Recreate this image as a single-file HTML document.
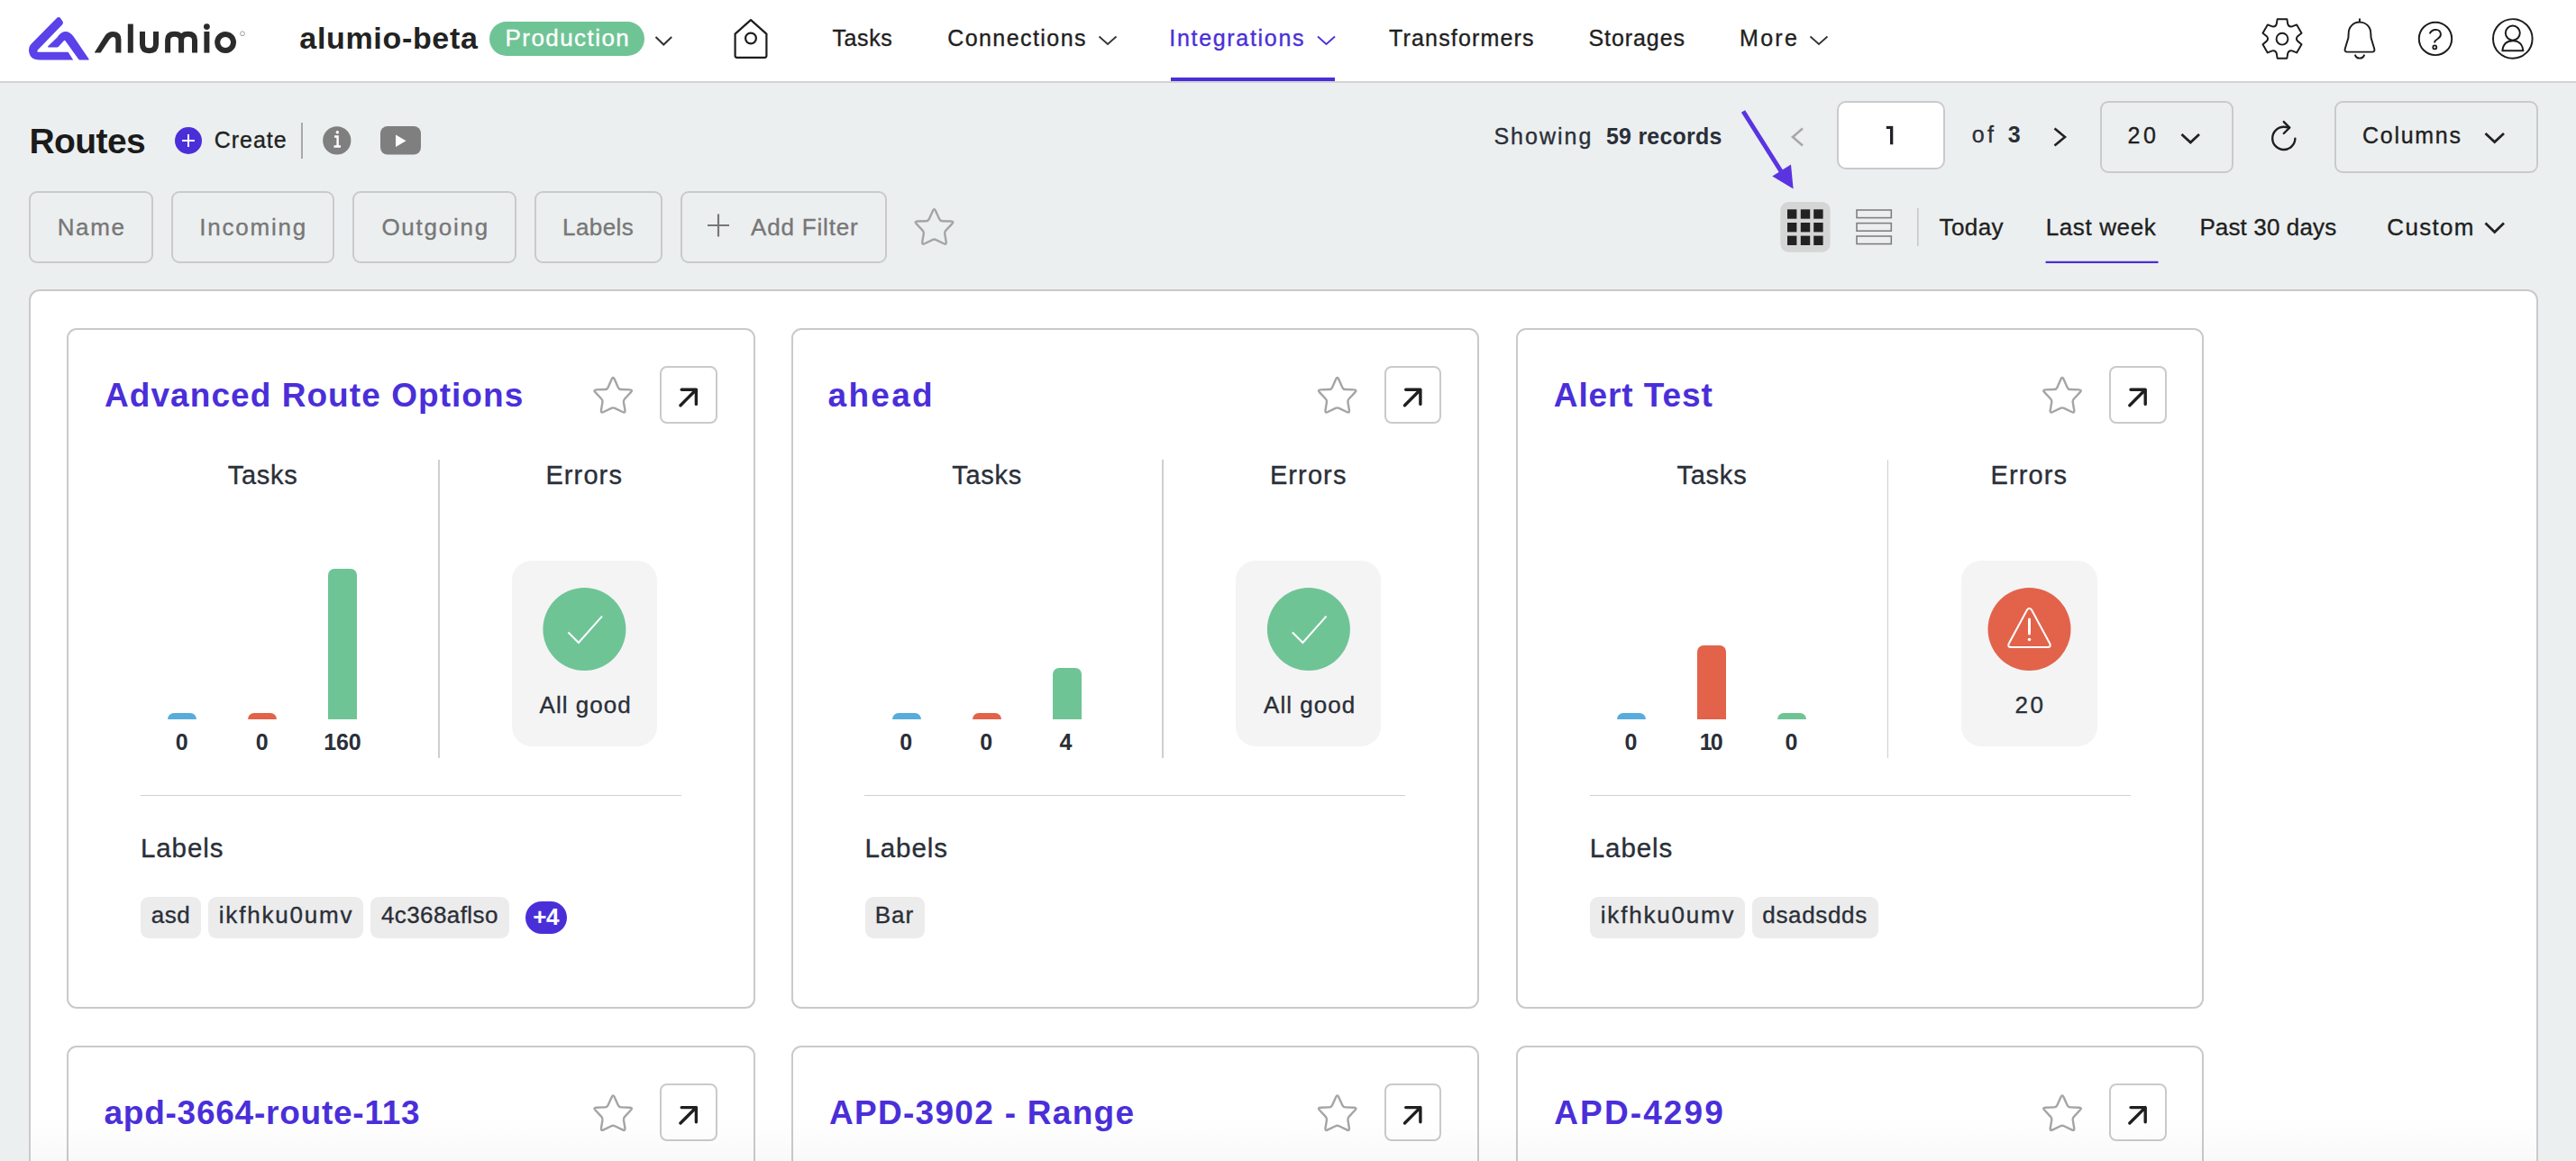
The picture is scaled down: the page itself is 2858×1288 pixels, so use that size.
<!DOCTYPE html>
<html><head><meta charset="utf-8"><style>
html,body{margin:0;padding:0;}
body{width:2858px;height:1288px;overflow:hidden;position:relative;background:#eceff0;font-family:"Liberation Sans",sans-serif;}
.t{position:absolute;white-space:nowrap;}
.a{position:absolute;box-sizing:border-box;}
svg{position:absolute;overflow:visible;}
</style></head><body>
<!-- header -->
<div class="a" style="left:0;top:0;width:2858px;height:90px;background:#fff;"></div>
<div class="a" style="left:0;top:90px;width:2858px;height:2px;background:#d3d3d3;"></div>
<!-- logo mark -->
<svg style="left:0;top:0" width="300" height="90" viewBox="0 0 300 90">
<path fill="#5b41e9" d="M63.5 19.6 Q65.2 18.4 66.8 19.8 L69.6 23.8 Q70.6 25.6 69.2 27.2 L41.8 55.4 Q40.6 57.6 43 57.8 L75.6 57.8 L81.2 66.4 L44 66.6 Q32.4 66.6 32 55.6 Q32 51 35.6 47.8 Z"/>
<path fill="#5b41e9" d="M53 51.4 L63.2 41.8 Q67.6 35.2 72.2 35 Q78 35 81.6 40.6 L98.6 65.4 Q99 66.6 97.6 66.6 L89.4 66.6 Q88 66.6 87 65.4 L72.4 45.2 Q71.6 44.4 70.8 45.2 L65.2 51.4 Q64 52.6 62 52.6 L53.4 52.6 Z"/>
<g fill="none" stroke="#2b2b2b" stroke-width="6">

<path d="M144.8 26.6 L144.8 58.6"/>
<path d="M158 35 L158 49 Q158 56.2 165.5 56.2 Q173 56.2 173 49 L173 35"/>
<path d="M186.1 58.6 L186.1 44.5 Q186.1 37.8 193.6 37.8 Q201.1 37.8 201.1 44.5 L201.1 58.6 M201.1 44.5 Q201.1 37.8 208.6 37.8 Q216 37.8 216 44.5 L216 58.6"/>
<path d="M229.4 35 L229.4 58.6"/>
<ellipse cx="250.1" cy="47" rx="8.9" ry="9"/>
</g>
<circle cx="229.4" cy="29.6" r="3.4" fill="#2b2b2b"/>
<path fill="#2b2b2b" d="M104.7 58.6 L111.6 58.6 L121.6 43.6 Q123.4 41 125.4 41 Q128.3 41 128.3 44.5 L128.3 58.6 L134.4 58.6 L134.4 43.8 Q134.4 35 125.2 35 Q119.6 35 116.6 39.6 Z"/>
<circle cx="269" cy="37.3" r="2.4" fill="none" stroke="#888" stroke-width="0.8"/>
</svg>
<!-- production pill -->
<div class="a" style="left:543px;top:24px;width:172px;height:38px;border-radius:19px;background:#6fc496;"></div>
<svg style="left:0;top:0" width="2858" height="92" viewBox="0 0 2858 92">
<g fill="none" stroke="#333" stroke-width="2">
<path d="M727.5 41 L736.3 49.5 L745.2 41"/>
</g>
<!-- home -->
<g fill="none" stroke="#1c1c1c" stroke-width="2.2" stroke-linejoin="round">
<path d="M815.6 37.6 L833 22.1 L850.4 37.6 L850.4 61.8 Q850.4 63.8 848.4 63.8 L817.6 63.8 Q815.6 63.8 815.6 61.8 Z"/>
<circle cx="833" cy="42.5" r="5.9"/>
</g>
<g fill="none" stroke="#333" stroke-width="1.8">
<path d="M1219.5 40.5 L1229 49 L1238.5 40.5"/>
<path d="M1462 40.5 L1471.5 49 L1481 40.5" stroke="#4a2fd9"/>
<path d="M2008.5 40.5 L2018 49 L2027.5 40.5"/>
</g>
<!-- gear -->
<g fill="none" stroke="#1c1c1c" stroke-width="1.95" stroke-linejoin="round">
<path id="gear" d="M2525.76 26.66 L2526.66 21.15 L2537.34 21.15 L2538.24 26.66 Q2539.35 30.17 2542.95 29.38 L2548.17 27.40 L2553.51 36.65 L2549.19 40.18 Q2546.70 42.90 2549.19 45.62 L2553.51 49.15 L2548.17 58.40 L2542.95 56.42 Q2539.35 55.63 2538.24 59.14 L2537.34 64.65 L2526.66 64.65 L2525.76 59.14 Q2524.65 55.63 2521.05 56.42 L2515.83 58.40 L2510.49 49.15 L2514.81 45.62 Q2517.30 42.90 2514.81 40.18 L2510.49 36.65 L2515.83 27.40 L2521.05 29.38 Q2524.65 30.17 2525.76 26.66 Z"/>
<circle cx="2532" cy="43.2" r="6.4"/>
<!-- bell -->
<path d="M2618 20.5 L2618 25"/>
<path d="M2618 24.6 C2625 24.6 2630.3 30 2630.3 37 L2630.6 42 L2634.3 54.2 Q2635.1 57.6 2631.8 57.6 L2604.2 57.6 Q2600.9 57.6 2601.7 54.2 L2605.4 42 L2605.7 37 C2605.7 30 2611 24.6 2618 24.6 Z"/>
<path d="M2612.8 60.6 Q2614 64.6 2618 64.6 Q2622 64.6 2623.2 60.6"/>
<!-- help -->
<circle cx="2702" cy="42.9" r="18.2"/>
<path d="M2695.6 37.4 Q2697.8 32.9 2702.2 32.9 Q2707.9 33.2 2707.9 38.2 Q2707.9 40.8 2704.6 43 Q2701.4 45 2700.9 47.4"/>
<circle cx="2701.3" cy="52.4" r="2" stroke-width="1.8"/>
<!-- user -->
<circle cx="2787.8" cy="42.9" r="21.8"/>
<circle cx="2787.8" cy="36.6" r="8"/>
<path d="M2776.3 56.2 Q2777.5 45.2 2787.8 45.2 Q2798.2 45.2 2799.4 56.2 Z"/>
</g>
<!-- nav underline -->
<rect x="1299" y="86" width="182" height="4" fill="#4a2fd9"/>
</svg>

<!-- routes row -->
<svg style="left:0;top:0" width="2858" height="300" viewBox="0 0 2858 300">
<circle cx="209" cy="156" r="15" fill="#4a2fd9"/>
<path d="M202 156 L216 156 M209 149 L209 163" stroke="#fff" stroke-width="2"/>
<rect x="334" y="136" width="2" height="40" fill="#a8a8a8"/>
<circle cx="373.8" cy="155.9" r="15.6" fill="#7f7f7f"/>
<path d="M371 151.5 L374.6 151.5 L374.6 162.5 M370.5 162.5 L378 162.5" stroke="#fff" stroke-width="2.4" fill="none"/>
<circle cx="374.3" cy="146.8" r="1.7" fill="#fff"/>
<rect x="422" y="140" width="45" height="31.5" rx="8" fill="#7f7f7f"/>
<path d="M439 149.5 L450.5 156.2 L439 163 Z" fill="#fff"/>
<!-- pagination chevrons -->
<path d="M2000 142.5 L1989 152 L2000 161.5" fill="none" stroke="#a8a8a8" stroke-width="2.6"/>
<path d="M2279.5 142.5 L2291 152 L2279.5 161.5" fill="none" stroke="#222" stroke-width="2.6"/>
<path d="M2420.5 149 L2430.3 158 L2440 149" fill="none" stroke="#222" stroke-width="2.8"/>
<path d="M2757.5 148 L2767.7 157.5 L2778 148" fill="none" stroke="#222" stroke-width="2.8"/>
<!-- refresh -->
<path d="M2546.4 153.6 A12.6 12.6 0 1 1 2534 140.8 L2540 141.5" fill="none" stroke="#1f1f1f" stroke-width="2.4" stroke-linecap="round"/>
<path d="M2533.8 135.1 L2540.2 141.6 L2533.8 148" fill="none" stroke="#1f1f1f" stroke-width="2.4" stroke-linecap="round" stroke-linejoin="round"/>
<!-- arrow annotation -->
<path d="M1934 123.5 L1976 190" stroke="#5a34e0" stroke-width="5"/>
<path d="M1966.3 195.6 L1987 182.4 L1989.6 209.6 Z" fill="#5a34e0"/>
<!-- filter plus -->
<path d="M785 250 L809 250 M797 237.6 L797 262.5" stroke="#777" stroke-width="2.2"/>
<!-- filter star -->
<path id="fstar" d="M1035.02 233.78 Q1036.50 230.50 1037.98 233.78 L1042.19 243.10 Q1043.10 245.10 1045.30 245.18 L1055.10 245.56 Q1058.70 245.70 1056.25 248.33 L1049.40 255.69 Q1047.90 257.30 1048.26 259.47 L1049.71 268.25 Q1050.30 271.80 1047.06 270.23 L1038.48 266.06 Q1036.50 265.10 1034.52 266.06 L1025.94 270.23 Q1022.70 271.80 1023.29 268.25 L1024.74 259.47 Q1025.10 257.30 1023.60 255.69 L1016.75 248.33 Q1014.30 245.70 1017.90 245.56 L1027.70 245.18 Q1029.90 245.10 1030.81 243.10 Z" fill="none" stroke="#a5a5a5" stroke-width="2.4" stroke-linejoin="round"/>
<!-- grid button -->
<rect x="1975.3" y="224" width="55.3" height="55.7" rx="9" fill="#d5d5d5"/>
<g fill="#222">
<rect x="1983" y="232.3" width="10.4" height="10.4"/><rect x="1997.8" y="232.3" width="10.4" height="10.4"/><rect x="2012.2" y="232.3" width="10.4" height="10.4"/>
<rect x="1983" y="247" width="10.4" height="10.4"/><rect x="1997.8" y="247" width="10.4" height="10.4"/><rect x="2012.2" y="247" width="10.4" height="10.4"/>
<rect x="1983" y="261.6" width="10.4" height="10.4"/><rect x="1997.8" y="261.6" width="10.4" height="10.4"/><rect x="2012.2" y="261.6" width="10.4" height="10.4"/>
</g>
<g fill="none" stroke="#808080" stroke-width="1.6">
<rect x="2060" y="233" width="38.3" height="8.6"/>
<rect x="2060" y="247.6" width="38.3" height="8.6"/>
<rect x="2060" y="262" width="38.3" height="8.6"/>
</g>
<rect x="2127" y="231" width="1.6" height="42" fill="#c8c8c8"/>
<path d="M2757.5 247.5 L2767.7 257.5 L2778 247.5" fill="none" stroke="#222" stroke-width="2.8"/>
<rect x="2269.4" y="289.7" width="125.3" height="2.4" rx="1" fill="#4a2fd9"/>
</svg>
<!-- input boxes -->
<div class="a" style="left:2038.1px;top:112.0px;width:119.5px;height:76.1px;border:2px solid #cacaca;border-radius:10px;background:#fff;"></div>
<div class="a" style="left:2330.4px;top:111.9px;width:147.2px;height:79.7px;border:2px solid #cacaca;border-radius:9px;"></div>
<div class="a" style="left:2590.1px;top:111.9px;width:225.5px;height:79.7px;border:2px solid #cacaca;border-radius:9px;"></div>
<svg style="left:0;top:0" width="2858" height="300" viewBox="0 0 2858 300"><rect x="2097" y="139.9" width="3.3" height="20.4" fill="#1f2226"/><rect x="2092.8" y="139.9" width="5" height="3.1" fill="#1f2226"/>
</svg>
<!-- filter boxes -->
<div class="a" style="left:32.0px;top:211.9px;width:137.9px;height:79.9px;border:2px solid #cacaca;border-radius:9px;"></div>
<div class="a" style="left:189.9px;top:211.9px;width:181.1px;height:79.9px;border:2px solid #cacaca;border-radius:9px;"></div>
<div class="a" style="left:391.2px;top:211.9px;width:182.0px;height:79.9px;border:2px solid #cacaca;border-radius:9px;"></div>
<div class="a" style="left:592.7px;top:211.9px;width:142.6px;height:79.9px;border:2px solid #cacaca;border-radius:9px;"></div>
<div class="a" style="left:755.0px;top:211.9px;width:228.6px;height:79.9px;border:2px solid #cacaca;border-radius:9px;"></div>

<!-- main container -->
<div class="a" style="left:31.8px;top:321.4px;width:2783.8px;height:1101.2px;border:2px solid #cacaca;border-radius:12px;background:#fff;"></div>
<div class="a" style="left:74.2px;top:364.4px;width:763.4px;height:754.6px;border:2px solid #cacaca;border-radius:11px;background:#fff;"></div>
<div class="a" style="left:732.2px;top:406.0px;width:63.7px;height:63.9px;border:2px solid #cacaca;border-radius:8px;"></div>
<div class="a" style="left:485.8px;top:509.7px;width:1.8px;height:331px;background:#cfcfcf;"></div>
<div class="a" style="left:155.7px;top:881.6px;width:600.2px;height:1.8px;background:#cfcfcf;"></div>
<div class="a" style="left:567.9px;top:622px;width:161px;height:206px;border-radius:22px;background:#f4f4f4;"></div>
<div class="a" style="left:186.0px;top:790.8px;width:32px;height:7px;border-radius:7px 7px 0 0;background:#58acdc;"></div>
<div class="a" style="left:275.0px;top:790.8px;width:32px;height:7px;border-radius:7px 7px 0 0;background:#e2634a;"></div>
<div class="a" style="left:364.0px;top:630.8px;width:32px;height:167px;border-radius:7px 7px 0 0;background:#6fc496;"></div>
<div class="a" style="left:156.1px;top:995px;width:67.0px;height:45.5px;border-radius:9px;background:#ececec;"></div>
<div class="a" style="left:231.2px;top:995px;width:171.8px;height:45.5px;border-radius:9px;background:#ececec;"></div>
<div class="a" style="left:411.2px;top:995px;width:153.9px;height:45.5px;border-radius:9px;background:#ececec;"></div>
<div class="a" style="left:583.1px;top:1000.3px;width:45.6px;height:35.5px;border-radius:18px;background:#4a2fd9;"></div>
<svg style="left:0;top:0" width="2858" height="1288" viewBox="0 0 2858 1288">
<path d="M678.72 420.58 Q680.20 417.30 681.68 420.58 L685.89 429.90 Q686.80 431.90 689.00 431.98 L698.80 432.36 Q702.40 432.50 699.95 435.13 L693.10 442.49 Q691.60 444.10 691.96 446.27 L693.41 455.05 Q694.00 458.60 690.76 457.03 L682.18 452.86 Q680.20 451.90 678.22 452.86 L669.64 457.03 Q666.40 458.60 666.99 455.05 L668.44 446.27 Q668.80 444.10 667.30 442.49 L660.45 435.13 Q658.00 432.50 661.60 432.36 L671.40 431.98 Q673.60 431.90 674.51 429.90 Z" fill="none" stroke="#a5a5a5" stroke-width="2.4" stroke-linejoin="round"/>
<path d="M755.0 449.7 L772.4 432.3 M756.2 432.3 L772.4 432.3 L772.4 448.4" fill="none" stroke="#1f1f1f" stroke-width="3.4" stroke-linecap="round" stroke-linejoin="round"/>
<circle cx="648.4" cy="698" r="46" fill="#6fc496"/>
<path d="M630.4 701.5 L641.9 713 L668.0 683.7" fill="none" stroke="#fff" stroke-width="2"/>
</svg>
<div class="a" style="left:74.2px;top:1159.7px;width:763.4px;height:400px;border:2px solid #cacaca;border-radius:11px;background:#fff;"></div>
<div class="a" style="left:732.2px;top:1202.3px;width:63.7px;height:63.7px;border:2px solid #cacaca;border-radius:8px;"></div>
<svg style="left:0;top:0" width="2858" height="1288" viewBox="0 0 2858 1288"><path d="M678.72 1216.98 Q680.20 1213.70 681.68 1216.98 L685.89 1226.30 Q686.80 1228.30 689.00 1228.38 L698.80 1228.76 Q702.40 1228.90 699.95 1231.53 L693.10 1238.89 Q691.60 1240.50 691.96 1242.67 L693.41 1251.45 Q694.00 1255.00 690.76 1253.43 L682.18 1249.26 Q680.20 1248.30 678.22 1249.26 L669.64 1253.43 Q666.40 1255.00 666.99 1251.45 L668.44 1242.67 Q668.80 1240.50 667.30 1238.89 L660.45 1231.53 Q658.00 1228.90 661.60 1228.76 L671.40 1228.38 Q673.60 1228.30 674.51 1226.30 Z" fill="none" stroke="#a5a5a5" stroke-width="2.4" stroke-linejoin="round"/><path d="M755.0 1246 L772.4 1228.6 M756.2 1228.6 L772.4 1228.6 L772.4 1244.7" fill="none" stroke="#1f1f1f" stroke-width="3.4" stroke-linecap="round" stroke-linejoin="round"/></svg>
<div class="a" style="left:877.7px;top:364.4px;width:763.4px;height:754.6px;border:2px solid #cacaca;border-radius:11px;background:#fff;"></div>
<div class="a" style="left:1535.7px;top:406.0px;width:63.7px;height:63.9px;border:2px solid #cacaca;border-radius:8px;"></div>
<div class="a" style="left:1289.3px;top:509.7px;width:1.8px;height:331px;background:#cfcfcf;"></div>
<div class="a" style="left:959.2px;top:881.6px;width:600.2px;height:1.8px;background:#cfcfcf;"></div>
<div class="a" style="left:1371.4px;top:622px;width:161px;height:206px;border-radius:22px;background:#f4f4f4;"></div>
<div class="a" style="left:989.5px;top:790.8px;width:32px;height:7px;border-radius:7px 7px 0 0;background:#58acdc;"></div>
<div class="a" style="left:1078.5px;top:790.8px;width:32px;height:7px;border-radius:7px 7px 0 0;background:#e2634a;"></div>
<div class="a" style="left:1167.5px;top:740.8px;width:32px;height:57px;border-radius:7px 7px 0 0;background:#6fc496;"></div>
<div class="a" style="left:960.0px;top:995px;width:66.0px;height:45.5px;border-radius:9px;background:#ececec;"></div>
<svg style="left:0;top:0" width="2858" height="1288" viewBox="0 0 2858 1288">
<path d="M1482.22 420.58 Q1483.70 417.30 1485.18 420.58 L1489.39 429.90 Q1490.30 431.90 1492.50 431.98 L1502.30 432.36 Q1505.90 432.50 1503.45 435.13 L1496.60 442.49 Q1495.10 444.10 1495.46 446.27 L1496.91 455.05 Q1497.50 458.60 1494.26 457.03 L1485.68 452.86 Q1483.70 451.90 1481.72 452.86 L1473.14 457.03 Q1469.90 458.60 1470.49 455.05 L1471.94 446.27 Q1472.30 444.10 1470.80 442.49 L1463.95 435.13 Q1461.50 432.50 1465.10 432.36 L1474.90 431.98 Q1477.10 431.90 1478.01 429.90 Z" fill="none" stroke="#a5a5a5" stroke-width="2.4" stroke-linejoin="round"/>
<path d="M1558.5 449.7 L1575.9 432.3 M1559.7 432.3 L1575.9 432.3 L1575.9 448.4" fill="none" stroke="#1f1f1f" stroke-width="3.4" stroke-linecap="round" stroke-linejoin="round"/>
<circle cx="1451.9" cy="698" r="46" fill="#6fc496"/>
<path d="M1433.9 701.5 L1445.4 713 L1471.5 683.7" fill="none" stroke="#fff" stroke-width="2"/>
</svg>
<div class="a" style="left:877.7px;top:1159.7px;width:763.4px;height:400px;border:2px solid #cacaca;border-radius:11px;background:#fff;"></div>
<div class="a" style="left:1535.7px;top:1202.3px;width:63.7px;height:63.7px;border:2px solid #cacaca;border-radius:8px;"></div>
<svg style="left:0;top:0" width="2858" height="1288" viewBox="0 0 2858 1288"><path d="M1482.22 1216.98 Q1483.70 1213.70 1485.18 1216.98 L1489.39 1226.30 Q1490.30 1228.30 1492.50 1228.38 L1502.30 1228.76 Q1505.90 1228.90 1503.45 1231.53 L1496.60 1238.89 Q1495.10 1240.50 1495.46 1242.67 L1496.91 1251.45 Q1497.50 1255.00 1494.26 1253.43 L1485.68 1249.26 Q1483.70 1248.30 1481.72 1249.26 L1473.14 1253.43 Q1469.90 1255.00 1470.49 1251.45 L1471.94 1242.67 Q1472.30 1240.50 1470.80 1238.89 L1463.95 1231.53 Q1461.50 1228.90 1465.10 1228.76 L1474.90 1228.38 Q1477.10 1228.30 1478.01 1226.30 Z" fill="none" stroke="#a5a5a5" stroke-width="2.4" stroke-linejoin="round"/><path d="M1558.5 1246 L1575.9 1228.6 M1559.7 1228.6 L1575.9 1228.6 L1575.9 1244.7" fill="none" stroke="#1f1f1f" stroke-width="3.4" stroke-linecap="round" stroke-linejoin="round"/></svg>
<div class="a" style="left:1682.0px;top:364.4px;width:763.4px;height:754.6px;border:2px solid #cacaca;border-radius:11px;background:#fff;"></div>
<div class="a" style="left:2340.0px;top:406.0px;width:63.7px;height:63.9px;border:2px solid #cacaca;border-radius:8px;"></div>
<div class="a" style="left:2093.6px;top:509.7px;width:1.8px;height:331px;background:#cfcfcf;"></div>
<div class="a" style="left:1763.5px;top:881.6px;width:600.2px;height:1.8px;background:#cfcfcf;"></div>
<div class="a" style="left:2175.7px;top:622px;width:151.6px;height:206px;border-radius:22px;background:#f4f4f4;"></div>
<div class="a" style="left:1793.8px;top:790.8px;width:32px;height:7px;border-radius:7px 7px 0 0;background:#58acdc;"></div>
<div class="a" style="left:1882.8px;top:715.8px;width:32px;height:82px;border-radius:7px 7px 0 0;background:#e2634a;"></div>
<div class="a" style="left:1971.8px;top:790.8px;width:32px;height:7px;border-radius:7px 7px 0 0;background:#6fc496;"></div>
<div class="a" style="left:1764.2px;top:995px;width:171.6px;height:45.5px;border-radius:9px;background:#ececec;"></div>
<div class="a" style="left:1944.2px;top:995px;width:139.5px;height:45.5px;border-radius:9px;background:#ececec;"></div>
<svg style="left:0;top:0" width="2858" height="1288" viewBox="0 0 2858 1288">
<path d="M2286.52 420.58 Q2288.00 417.30 2289.48 420.58 L2293.69 429.90 Q2294.60 431.90 2296.80 431.98 L2306.60 432.36 Q2310.20 432.50 2307.75 435.13 L2300.90 442.49 Q2299.40 444.10 2299.76 446.27 L2301.21 455.05 Q2301.80 458.60 2298.56 457.03 L2289.98 452.86 Q2288.00 451.90 2286.02 452.86 L2277.44 457.03 Q2274.20 458.60 2274.79 455.05 L2276.24 446.27 Q2276.60 444.10 2275.10 442.49 L2268.25 435.13 Q2265.80 432.50 2269.40 432.36 L2279.20 431.98 Q2281.40 431.90 2282.31 429.90 Z" fill="none" stroke="#a5a5a5" stroke-width="2.4" stroke-linejoin="round"/>
<path d="M2362.8 449.7 L2380.2 432.3 M2364.0 432.3 L2380.2 432.3 L2380.2 448.4" fill="none" stroke="#1f1f1f" stroke-width="3.4" stroke-linecap="round" stroke-linejoin="round"/>
<circle cx="2251.5" cy="698" r="46" fill="#e2634a"/>
<path d="M2251.5 675 Q2253.0 675 2254.0 676.5 L2274.5 714.5 Q2275.5 718 2272.0 718 L2231.0 718 Q2227.5 718 2228.5 714.5 L2249.0 676.5 Q2250.0 675 2251.5 675 Z" fill="none" stroke="#fff" stroke-width="2"/>
<path d="M2251.5 687 L2251.5 703" stroke="#fff" stroke-width="3" stroke-linecap="round"/>
<circle cx="2251.5" cy="709.5" r="1.8" fill="#fff"/>
</svg>
<div class="a" style="left:1682.0px;top:1159.7px;width:763.4px;height:400px;border:2px solid #cacaca;border-radius:11px;background:#fff;"></div>
<div class="a" style="left:2340.0px;top:1202.3px;width:63.7px;height:63.7px;border:2px solid #cacaca;border-radius:8px;"></div>
<svg style="left:0;top:0" width="2858" height="1288" viewBox="0 0 2858 1288"><path d="M2286.52 1216.98 Q2288.00 1213.70 2289.48 1216.98 L2293.69 1226.30 Q2294.60 1228.30 2296.80 1228.38 L2306.60 1228.76 Q2310.20 1228.90 2307.75 1231.53 L2300.90 1238.89 Q2299.40 1240.50 2299.76 1242.67 L2301.21 1251.45 Q2301.80 1255.00 2298.56 1253.43 L2289.98 1249.26 Q2288.00 1248.30 2286.02 1249.26 L2277.44 1253.43 Q2274.20 1255.00 2274.79 1251.45 L2276.24 1242.67 Q2276.60 1240.50 2275.10 1238.89 L2268.25 1231.53 Q2265.80 1228.90 2269.40 1228.76 L2279.20 1228.38 Q2281.40 1228.30 2282.31 1226.30 Z" fill="none" stroke="#a5a5a5" stroke-width="2.4" stroke-linejoin="round"/><path d="M2362.8 1246 L2380.2 1228.6 M2364.0 1228.6 L2380.2 1228.6 L2380.2 1244.7" fill="none" stroke="#1f1f1f" stroke-width="3.4" stroke-linecap="round" stroke-linejoin="round"/></svg>
<div class="a" style="left:34.4px;top:1238px;width:2778.6px;height:50px;background:linear-gradient(to bottom, rgba(0,0,0,0), rgba(0,0,0,0.022));"></div>

<div class="t" style="left:332.30px;top:25.00px;font-size:34px;line-height:34px;font-weight:700;letter-spacing:0.671px;color:#222;">alumio-beta</div>
<div class="t" style="left:560.50px;top:29.00px;font-size:26px;line-height:26px;font-weight:400;letter-spacing:1.440px;color:#fff;-webkit-text-stroke:0.35px #fff;">Production</div>
<div class="t" style="left:923.40px;top:29.50px;font-size:25px;line-height:25px;font-weight:400;letter-spacing:0.624px;color:#1f1f1f;-webkit-text-stroke:0.35px #1f1f1f;">Tasks</div>
<div class="t" style="left:1051.20px;top:29.50px;font-size:25px;line-height:25px;font-weight:400;letter-spacing:1.432px;color:#1f1f1f;-webkit-text-stroke:0.35px #1f1f1f;">Connections</div>
<div class="t" style="left:1297.30px;top:29.50px;font-size:25px;line-height:25px;font-weight:400;letter-spacing:1.687px;color:#4a2fd9;-webkit-text-stroke:0.35px #4a2fd9;">Integrations</div>
<div class="t" style="left:1541.00px;top:29.50px;font-size:25px;line-height:25px;font-weight:400;letter-spacing:1.163px;color:#1f1f1f;-webkit-text-stroke:0.35px #1f1f1f;">Transformers</div>
<div class="t" style="left:1762.50px;top:29.50px;font-size:25px;line-height:25px;font-weight:400;letter-spacing:0.920px;color:#1f1f1f;-webkit-text-stroke:0.35px #1f1f1f;">Storages</div>
<div class="t" style="left:1930.00px;top:29.50px;font-size:25px;line-height:25px;font-weight:400;letter-spacing:2.315px;color:#1f1f1f;-webkit-text-stroke:0.35px #1f1f1f;">More</div>
<div class="t" style="left:32.50px;top:136.50px;font-size:39px;line-height:39px;font-weight:700;letter-spacing:-0.597px;color:#1b1b1b;">Routes</div>
<div class="t" style="left:237.70px;top:142.50px;font-size:25px;line-height:25px;font-weight:400;letter-spacing:0.993px;color:#1f1f1f;-webkit-text-stroke:0.35px #1f1f1f;">Create</div>
<div class="t" style="left:1657.40px;top:138.50px;font-size:25px;line-height:25px;font-weight:400;letter-spacing:2.001px;color:#2a2f38;-webkit-text-stroke:0.35px #2a2f38;">Showing</div>
<div class="t" style="left:1782.00px;top:138.50px;font-size:25px;line-height:25px;font-weight:700;letter-spacing:0.215px;color:#2a2f38;">59 records</div>
<div class="t" style="left:2187.80px;top:137.00px;font-size:25px;line-height:25px;font-weight:400;letter-spacing:3.296px;color:#2a2f38;-webkit-text-stroke:0.35px #2a2f38;">of</div>
<div class="t" style="left:2227.80px;top:137.00px;font-size:25px;line-height:25px;font-weight:700;letter-spacing:0.000px;color:#2a2f38;">3</div>
<div class="t" style="left:2360.60px;top:138.00px;font-size:25px;line-height:25px;font-weight:400;letter-spacing:3.496px;color:#1f1f1f;-webkit-text-stroke:0.35px #1f1f1f;">20</div>
<div class="t" style="left:2621.00px;top:138.00px;font-size:25px;line-height:25px;font-weight:400;letter-spacing:1.726px;color:#1f1f1f;-webkit-text-stroke:0.35px #1f1f1f;">Columns</div>
<div class="t" style="left:63.70px;top:238.70px;font-size:26px;line-height:26px;font-weight:400;letter-spacing:1.602px;color:#777777;-webkit-text-stroke:0.35px #777777;">Name</div>
<div class="t" style="left:221.20px;top:238.70px;font-size:26px;line-height:26px;font-weight:400;letter-spacing:1.795px;color:#777777;-webkit-text-stroke:0.35px #777777;">Incoming</div>
<div class="t" style="left:423.40px;top:238.70px;font-size:26px;line-height:26px;font-weight:400;letter-spacing:1.748px;color:#777777;-webkit-text-stroke:0.35px #777777;">Outgoing</div>
<div class="t" style="left:624.00px;top:238.70px;font-size:26px;line-height:26px;font-weight:400;letter-spacing:0.437px;color:#777777;-webkit-text-stroke:0.35px #777777;">Labels</div>
<div class="t" style="left:833.00px;top:238.70px;font-size:26px;line-height:26px;font-weight:400;letter-spacing:0.822px;color:#777777;-webkit-text-stroke:0.35px #777777;">Add Filter</div>
<div class="t" style="left:2151.50px;top:238.50px;font-size:26px;line-height:26px;font-weight:400;letter-spacing:0.430px;color:#1f1f1f;-webkit-text-stroke:0.35px #1f1f1f;">Today</div>
<div class="t" style="left:2269.70px;top:238.50px;font-size:26px;line-height:26px;font-weight:400;letter-spacing:0.630px;color:#1f1f1f;-webkit-text-stroke:0.35px #1f1f1f;">Last week</div>
<div class="t" style="left:2440.40px;top:238.50px;font-size:26px;line-height:26px;font-weight:400;letter-spacing:0.135px;color:#1f1f1f;-webkit-text-stroke:0.35px #1f1f1f;">Past 30 days</div>
<div class="t" style="left:2648.30px;top:238.50px;font-size:26px;line-height:26px;font-weight:400;letter-spacing:1.316px;color:#1f1f1f;-webkit-text-stroke:0.35px #1f1f1f;">Custom</div>
<div class="t" style="left:116.00px;top:420.00px;font-size:37px;line-height:37px;font-weight:700;letter-spacing:1.062px;color:#4a2fd9;">Advanced Route Options</div>
<div class="t" style="left:252.65px;top:512.80px;font-size:29px;line-height:29px;font-weight:400;letter-spacing:0.768px;color:#2a2f38;-webkit-text-stroke:0.35px #2a2f38;">Tasks</div>
<div class="t" style="left:605.40px;top:512.80px;font-size:29px;line-height:29px;font-weight:400;letter-spacing:1.111px;color:#2a2f38;-webkit-text-stroke:0.35px #2a2f38;">Errors</div>
<div class="t" style="left:194.65px;top:810.50px;font-size:25px;line-height:25px;font-weight:700;letter-spacing:0.000px;color:#2a2f38;">0</div>
<div class="t" style="left:283.65px;top:810.50px;font-size:25px;line-height:25px;font-weight:700;letter-spacing:0.000px;color:#2a2f38;">0</div>
<div class="t" style="left:359.30px;top:810.50px;font-size:25px;line-height:25px;font-weight:700;letter-spacing:-0.204px;color:#2a2f38;">160</div>
<div class="t" style="left:598.60px;top:769.20px;font-size:26px;line-height:26px;font-weight:400;letter-spacing:1.015px;color:#2a2f38;-webkit-text-stroke:0.35px #2a2f38;">All good</div>
<div class="t" style="left:155.90px;top:925.85px;font-size:29.5px;line-height:29.5px;font-weight:400;letter-spacing:0.944px;color:#2a2f38;-webkit-text-stroke:0.35px #2a2f38;">Labels</div>
<div class="t" style="left:167.70px;top:1002.00px;font-size:26px;line-height:26px;font-weight:400;letter-spacing:0.570px;color:#2a2f38;-webkit-text-stroke:0.35px #2a2f38;">asd</div>
<div class="t" style="left:242.80px;top:1002.00px;font-size:26px;line-height:26px;font-weight:400;letter-spacing:1.789px;color:#2a2f38;-webkit-text-stroke:0.35px #2a2f38;">ikfhku0umv</div>
<div class="t" style="left:423.00px;top:1002.00px;font-size:26px;line-height:26px;font-weight:400;letter-spacing:0.400px;color:#2a2f38;-webkit-text-stroke:0.35px #2a2f38;">4c368aflso</div>
<div class="t" style="left:591.30px;top:1003.90px;font-size:26px;line-height:26px;font-weight:700;letter-spacing:-0.484px;color:#fff;">+4</div>
<div class="t" style="left:918.50px;top:420.00px;font-size:37px;line-height:37px;font-weight:700;letter-spacing:2.317px;color:#4a2fd9;">ahead</div>
<div class="t" style="left:1056.15px;top:512.80px;font-size:29px;line-height:29px;font-weight:400;letter-spacing:0.768px;color:#2a2f38;-webkit-text-stroke:0.35px #2a2f38;">Tasks</div>
<div class="t" style="left:1408.90px;top:512.80px;font-size:29px;line-height:29px;font-weight:400;letter-spacing:1.111px;color:#2a2f38;-webkit-text-stroke:0.35px #2a2f38;">Errors</div>
<div class="t" style="left:998.15px;top:810.50px;font-size:25px;line-height:25px;font-weight:700;letter-spacing:0.000px;color:#2a2f38;">0</div>
<div class="t" style="left:1087.15px;top:810.50px;font-size:25px;line-height:25px;font-weight:700;letter-spacing:0.000px;color:#2a2f38;">0</div>
<div class="t" style="left:1175.50px;top:810.50px;font-size:25px;line-height:25px;font-weight:700;letter-spacing:0.000px;color:#2a2f38;">4</div>
<div class="t" style="left:1402.10px;top:769.20px;font-size:26px;line-height:26px;font-weight:400;letter-spacing:1.015px;color:#2a2f38;-webkit-text-stroke:0.35px #2a2f38;">All good</div>
<div class="t" style="left:959.40px;top:925.85px;font-size:29.5px;line-height:29.5px;font-weight:400;letter-spacing:0.944px;color:#2a2f38;-webkit-text-stroke:0.35px #2a2f38;">Labels</div>
<div class="t" style="left:970.70px;top:1002.00px;font-size:26px;line-height:26px;font-weight:400;letter-spacing:1.049px;color:#2a2f38;-webkit-text-stroke:0.35px #2a2f38;">Bar</div>
<div class="t" style="left:1723.80px;top:420.00px;font-size:37px;line-height:37px;font-weight:700;letter-spacing:0.890px;color:#4a2fd9;">Alert Test</div>
<div class="t" style="left:1860.45px;top:512.80px;font-size:29px;line-height:29px;font-weight:400;letter-spacing:0.768px;color:#2a2f38;-webkit-text-stroke:0.35px #2a2f38;">Tasks</div>
<div class="t" style="left:2208.50px;top:512.80px;font-size:29px;line-height:29px;font-weight:400;letter-spacing:1.111px;color:#2a2f38;-webkit-text-stroke:0.35px #2a2f38;">Errors</div>
<div class="t" style="left:1802.45px;top:810.50px;font-size:25px;line-height:25px;font-weight:700;letter-spacing:0.000px;color:#2a2f38;">0</div>
<div class="t" style="left:1885.80px;top:810.50px;font-size:25px;line-height:25px;font-weight:700;letter-spacing:-1.904px;color:#2a2f38;">10</div>
<div class="t" style="left:1980.45px;top:810.50px;font-size:25px;line-height:25px;font-weight:700;letter-spacing:0.000px;color:#2a2f38;">0</div>
<div class="t" style="left:2235.50px;top:769.20px;font-size:26px;line-height:26px;font-weight:400;letter-spacing:2.540px;color:#2a2f38;-webkit-text-stroke:0.35px #2a2f38;">20</div>
<div class="t" style="left:1763.70px;top:925.85px;font-size:29.5px;line-height:29.5px;font-weight:400;letter-spacing:0.944px;color:#2a2f38;-webkit-text-stroke:0.35px #2a2f38;">Labels</div>
<div class="t" style="left:1775.80px;top:1002.00px;font-size:26px;line-height:26px;font-weight:400;letter-spacing:1.789px;color:#2a2f38;-webkit-text-stroke:0.35px #2a2f38;">ikfhku0umv</div>
<div class="t" style="left:1955.30px;top:1002.00px;font-size:26px;line-height:26px;font-weight:400;letter-spacing:0.657px;color:#2a2f38;-webkit-text-stroke:0.35px #2a2f38;">dsadsdds</div>
<div class="t" style="left:115.50px;top:1215.80px;font-size:37px;line-height:37px;font-weight:700;letter-spacing:0.755px;color:#4a2fd9;">apd-3664-route-113</div>
<div class="t" style="left:920.00px;top:1215.80px;font-size:37px;line-height:37px;font-weight:700;letter-spacing:1.291px;color:#4a2fd9;">APD-3902 - Range</div>
<div class="t" style="left:1724.30px;top:1215.80px;font-size:37px;line-height:37px;font-weight:700;letter-spacing:2.104px;color:#4a2fd9;">APD-4299</div>
</body></html>
